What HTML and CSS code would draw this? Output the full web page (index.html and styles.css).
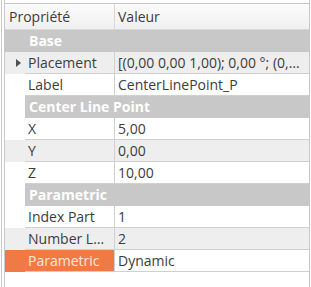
FILE: index.html
```html
<!DOCTYPE html>
<html>
<head>
<meta charset="utf-8">
<link rel="stylesheet" href="styles.css">
</head>
<body>
<div class="outer">
  <div class="tree">
    <div class="header">
      <div class="hcell hname">Propriété</div>
      <div class="hcell hvalue">Valeur</div>
    </div>
    <div class="row group full"><div class="branch"></div><div class="gname">Base</div></div>
    <div class="row alt"><div class="branch"><span class="arrow"></span></div><div class="name">Placement</div><div class="value">[(0,00 0,00 1,00); 0,00 °; (0,…</div></div>
    <div class="row"><div class="branch"></div><div class="name">Label</div><div class="value">CenterLinePoint_P</div></div>
    <div class="row group"><div class="branch"></div><div class="gname">Center Line Point</div></div>
    <div class="row"><div class="branch"></div><div class="name">X</div><div class="value">5,00</div></div>
    <div class="row alt"><div class="branch"></div><div class="name">Y</div><div class="value">0,00</div></div>
    <div class="row"><div class="branch"></div><div class="name">Z</div><div class="value">10,00</div></div>
    <div class="row group"><div class="branch"></div><div class="gname">Parametric</div></div>
    <div class="row"><div class="branch"></div><div class="name">Index Part</div><div class="value">1</div></div>
    <div class="row alt"><div class="branch"></div><div class="name">Number L…</div><div class="value">2</div></div>
    <div class="row selected"><div class="branch"></div><div class="name">Parametric</div><div class="value">Dynamic</div></div>
  </div>
</div>
</body>
</html>
```
FILE: styles.css
```css
html, body {
  margin: 0;
  padding: 0;
  background: #ffffff;
}
body {
  font-family: "Open Sans", "DejaVu Sans", sans-serif;
  font-size: 14px;
  color: #3c3c3c;
  width: 311px;
  height: 287px;
  overflow: hidden;
}
.outer {
  margin-left: 1px;
  border-left: 1px solid #c8c8c8;
  height: 287px;
  width: 308px;
}
.tree {
  margin-left: 2px;
  border-left: 1px solid #c8c8c8;
  border-right: 1px solid #c8c8c8;
  height: 287px;
  width: 304px;
  padding-top: 3px;
  box-sizing: content-box;
}
.header {
  display: flex;
  height: 25px;
  border-top: 1px solid #c8c8c8;
  border-bottom: 1px solid #d8d8d8;
  background: linear-gradient(#fbfbfb, #f0f0f0);
}
.hcell {
  display: flex;
  align-items: center;
  padding-left: 4px;
  color: #3c3c3c;
}
.hname {
  width: 105px;
  border-right: 1px solid #d8d8d8;
}
.hvalue {
  flex: 1;
  padding-left: 3px;
}
.row {
  display: flex;
  height: 22px;
  line-height: 21px;
  white-space: nowrap;
}
.branch {
  width: 20px;
  flex: none;
  position: relative;
}
.name, .value, .gname {
  border-bottom: 1px solid #d0d0d0;
  height: 21px;
  overflow: hidden;
}
.name {
  width: 86px;
  padding-left: 3px;
  border-right: 1px solid #d0d0d0;
  flex: none;
}
.value {
  flex: 1;
  padding-left: 3px;
}
.alt {
  background: #eeeeee;
}
.group .gname {
  flex: 1;
  background: #c8c8c8;
  color: #ffffff;
  font-weight: bold;
  padding-left: 4px;
  border-bottom: 1px solid #c8c8c8;
}
.group.full .branch {
  background: #c8c8c8;
}
.selected .branch, .selected .name {
  background: #f07a45;
  color: #fde8dc;
}
.arrow {
  position: absolute;
  left: 11px;
  top: 7px;
  width: 0;
  height: 0;
  border-top: 4px solid transparent;
  border-bottom: 4px solid transparent;
  border-left: 5px solid #505050;
}
```
